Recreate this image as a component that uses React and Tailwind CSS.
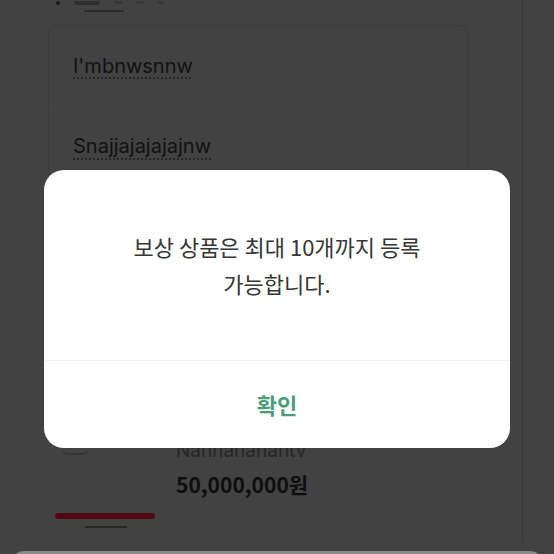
import React from 'react'

const kr = "font-['Noto_Sans_CJK_KR','Noto_Sans',sans-serif]"
const latin = "font-['Inter','Noto_Sans_CJK_KR',sans-serif]"

function TopTabs() {
  return (
    <div className="relative h-[25px]">
      <div className="flex items-start gap-[14px] pl-[8px] pt-[1px]">
        <span className="w-[4px] h-[4px] rounded-full bg-[#1c1c1c]" />
        <span className="w-[26px] h-[4px] rounded-b-[4px] bg-[#2e2e2e]" />
        <span className="w-[8px] h-[3px] bg-[#353535]" />
        <span className="w-[8px] h-[3px] bg-[#383838]" />
        <span className="w-[6px] h-[3px] bg-[#383838]" />
      </div>
      <div className="absolute left-[36px] top-[10px] w-[40px] h-[2px] bg-[#2a2a2a]" />
    </div>
  )
}

function Field({ text, last }) {
  return (
    <div className={`h-[80px] flex items-center px-[24px] ${last ? '' : 'border-b border-[#454545]'}`}>
      <span
        className={`${latin} text-[20px] text-[#111111] underline decoration-dotted decoration-[#262626] decoration-2 underline-offset-[5px]`}
      >
        {text}
      </span>
    </div>
  )
}

function ProductRow() {
  return (
    <div className="flex pl-[10px] h-[80px]">
      <div className="w-[118px] pt-[4px]">
        <div className="w-[26px] h-[6px] border-b-2 border-[#353535] rounded-b-[6px] ml-[4px]" />
      </div>
      <div className="flex flex-col">
        <span className={`${latin} text-[19px] leading-[24px] text-[#262626] -mt-[6px]`}>Nannananantv</span>
        <span className={`${kr} text-[21px] font-bold leading-[30px] mt-[6px] text-[#0e0e0e]`}>
          50,000,000원
        </span>
      </div>
    </div>
  )
}

function Dialog() {
  return (
    <div className="absolute left-[44px] top-[170px] w-[466px] h-[278px] rounded-[20px] bg-white flex flex-col overflow-hidden">
      <div className="h-[190px] flex items-center justify-center pb-[1px]">
        <p className={`${kr} text-[22px] leading-[37px] text-[#363636] text-center`}>
          보상 상품은 최대 10개까지 등록
          <br />
          가능합니다.
        </p>
      </div>
      <div className="h-px bg-[#f2f2f2]" />
      <button type="button" className="flex-1 flex items-center justify-center">
        <span className={`${kr} text-[22px] font-bold text-[#4b9c7d]`}>확인</span>
      </button>
    </div>
  )
}

export default function App() {
  return (
    <div className="relative w-[554px] h-[554px] overflow-hidden bg-[#424242]">
      <div className="flex flex-col h-full">
        <div className="w-[523px] h-[542px] shrink-0 border-r border-[#383838] pl-[48px] flex flex-col">
          <TopTabs />
          <div className="w-[420px] h-[170px] border-l border-t border-r border-[#3c3c3c] rounded-t-[8px]">
            <Field text="I'mbnwsnnw" />
            <Field text="Snajjajajajajnw" last />
          </div>
          <div className="h-[250px]" />
          <ProductRow />
          <div className="pl-[7px] -mt-[12px]">
            <div className="w-[100px] h-[6px] rounded-full bg-[#520812]" />
            <div className="w-[42px] h-[2px] rounded-full bg-[#262626] ml-[30px] mt-[7px]" />
          </div>
        </div>
        <div className="mt-[9px] mx-[10px] h-[20px] shrink-0 rounded-t-[14px] bg-[#8a8a8a]" />
      </div>
      <Dialog />
    </div>
  )
}
